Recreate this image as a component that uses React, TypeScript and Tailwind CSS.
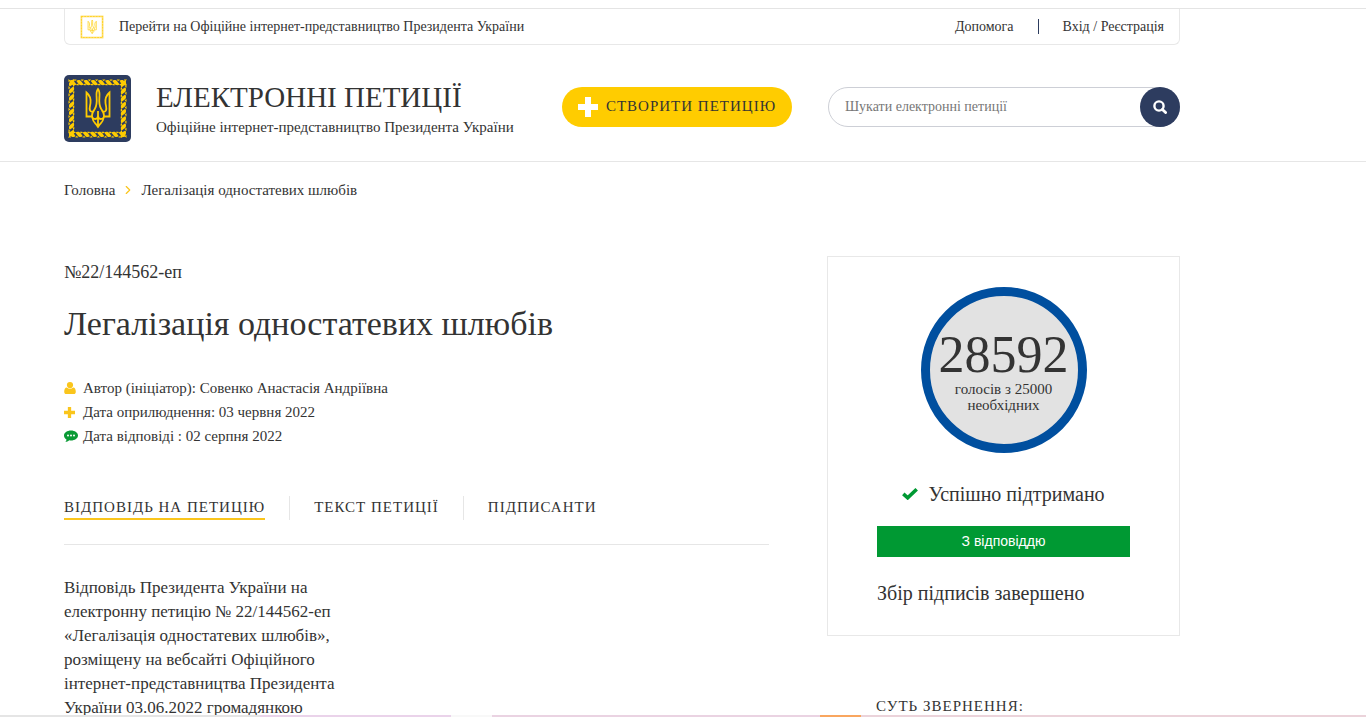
import React from 'react';
import { ChevronRight } from 'lucide-react';

type IconProps = { className?: string };

const PlusIcon: React.FC<IconProps> = ({ className }) => (
  <svg viewBox="0 0 20 20" fill="currentColor" className={className} aria-hidden="true">
    <path d="M7 0h6v7h7v6h-7v7H7v-7H0V7h7z" />
  </svg>
);

const UserIcon: React.FC<IconProps> = ({ className }) => (
  <svg viewBox="0 0 12 12" fill="currentColor" className={className} aria-hidden="true">
    <circle cx="6" cy="3.1" r="3.1" />
    <path d="M2.900 5.500C1 5.500.200 7.600.200 9.700.200 11.200 1 12 2.200 12h7.600c1.200 0 2-.8 2-2.300 0-2.100-.8-4.200-2.700-4.200-.8.800-1.900 1.200-3.100 1.200s-2.300-.4-3.100-1.200z" />
  </svg>
);

const CommentIcon: React.FC<IconProps> = ({ className }) => (
  <svg viewBox="0 0 14 12" className={className} aria-hidden="true">
    <path d="M7 .500c3.900 0 7 2.200 7 5s-3.100 5-7 5c-.6 0-1.200-.1-1.800-.2C4.100 11.300 2.800 11.900 1.300 12c.7-.8 1.100-1.500 1.200-2.600C.900 8.500 0 7.100 0 5.500c0-2.800 3.100-5 7-5z" fill="currentColor" />
    <g fill="#ffffff">
      <circle cx="4" cy="5.500" r="1" />
      <circle cx="7" cy="5.500" r="1" />
      <circle cx="10" cy="5.500" r="1" />
    </g>
  </svg>
);

const CheckIcon: React.FC<IconProps> = ({ className }) => (
  <svg viewBox="0 0 16 12" fill="none" stroke="currentColor" strokeWidth="3.6" className={className} aria-hidden="true">
    <path d="M1.300 5.800l4.400 4L14.700 1.300" />
  </svg>
);

const SearchIcon: React.FC<IconProps> = ({ className }) => (
  <svg viewBox="0 0 14 14" fill="none" stroke="currentColor" className={className} aria-hidden="true">
    <circle cx="6" cy="6" r="4.600" strokeWidth="2.400" />
    <path d="M9.400 9.400l3.200 3.200" strokeWidth="2.800" strokeLinecap="round" />
  </svg>
);

const meta = [
  { icon: UserIcon, color: 'text-[#fac51c]', size: 'size-3', text: 'Автор (ініціатор): Совенко Анастасія Андріївна' },
  { icon: PlusIcon, color: 'text-[#fac51c]', size: 'size-[11px]', text: 'Дата оприлюднення: 03 червня 2022' },
  { icon: CommentIcon, color: 'text-[#0a9a35]', size: 'h-3 w-[14px]', text: 'Дата відповіді : 02 серпня 2022' },
];

const tabs = [
  { label: 'Відповідь на петицію', active: true },
  { label: 'Текст петиції', active: false },
  { label: 'Підписанти', active: false },
];

const sides = [0, 90, 180, 270];
const leaves = [0, 1, 2, 3, 4, 5, 6, 7];

const Trident: React.FC = () => (
  <g fill="none" stroke="#ffcc00" strokeLinejoin="miter" strokeWidth="1.8">
    <path d="M34 14c-1.500 2-1.700 5-1.400 8 .4 5 .1 9-1.800 12-1.300 2-2.800 4-2.800 6.500 0 2 1.500 3.500 3.300 3.500 1.700 0 2.700-1.400 2.700-3.500 0 2.100 1 3.500 2.700 3.500 1.800 0 3.300-1.500 3.300-3.500 0-2.500-1.500-4.500-2.800-6.500-1.900-3-2.200-7-1.800-12 .3-3 .1-6-1.400-8z" />
    <path d="M28 41.500h-5.500V17.500c3.500 3 4.500 6 4 10.500-.3 3-1.500 5-.5 7.500.5 1.200 2 1.500 4 .5M40 41.500h5.500V17.500c-3.500 3-4.500 6-4 10.500.3 3 1.500 5 .5 7.500-.5 1.200-2 1.500-4 .5" />
    <path d="M34 36v15M28.500 43c.5 4 2.500 5 3.800 6.500L34 52l1.700-2.500C37 48 39 47 39.500 43" />
  </g>
);

const Crest: React.FC = () => (
  <svg viewBox="0 0 67 67" className="size-[67px] shrink-0" aria-hidden="true">
    <rect width="67" height="67" rx="5" fill="#2d3c5f" />
    {sides.map((angle) => (
      <g key={angle} transform={`rotate(${angle} 33.5 33.5)`} fill="#ffcc00">
        {leaves.map((n) => (
          <path
            key={n}
            transform={`translate(${5 + n * 7.2} 4.5)`}
            d="M0 1.200c2-1.400 4.500-.8 5.300 1l2.200 2.900c-2.200 1.100-4.500.6-5.500-1zM4.500 0h3.200l-1.800 1.800zM0 4.600l2-.4.8 1.600H.5z"
          />
        ))}
      </g>
    ))}
    <Trident />
  </svg>
);

const SmallCrest: React.FC = () => (
  <svg viewBox="0 0 67 67" className="size-6 shrink-0" aria-hidden="true">
    <rect x="4" y="4" width="59" height="59" fill="none" stroke="#ffe07a" strokeWidth="5" />
    <rect x="4" y="4" width="59" height="59" fill="none" stroke="#ffd42a" strokeWidth="3" strokeDasharray="5 3" />
    <g strokeWidth="3">
      <Trident />
    </g>
  </svg>
);

const TopBar: React.FC = () => (
  <div className="flex h-9 items-center rounded-b-md border border-t-0 border-[#e8e8e8] px-[15px] text-[14px]">
    <a href="#" className="flex items-center gap-[15px]">
      <SmallCrest />
      Перейти на Офіційне інтернет-представництво Президента України
    </a>
    <nav className="ml-auto flex items-center">
      <a href="#">Допомога</a>
      <span className="mx-6 h-[15px] w-px bg-[#2d3c5f]" />
      <a href="#">Вхід / Реєстрація</a>
    </nav>
  </div>
);

const Header: React.FC = () => (
  <header className="border-b border-[#e6e6e6]">
    <div className="ml-16 max-w-[1116px]">
      <TopBar />
      <div className="flex h-[116px] items-center pb-px pt-2">
        <div className="mt-1 flex grow items-center gap-[25px]">
          <Crest />
          <div>
            <p className="text-[29px] leading-9 uppercase">Електронні петиції</p>
            <p className="text-[15px] leading-6">Офіційне інтернет-представництво Президента України</p>
          </div>
        </div>
        <button className="flex h-10 w-[230px] shrink-0 items-center justify-center gap-2 rounded-full bg-[#ffcc00] text-[15px] uppercase tracking-[1px] whitespace-nowrap">
          <PlusIcon className="size-5 text-white" />
          Створити петицію
        </button>
        <form className="ml-9 flex h-10 w-[352px] rounded-full border border-[#cdcfd6]">
          <input
            type="text"
            aria-label="Шукати електронні петиції"
            placeholder="Шукати електронні петиції"
            className="min-w-0 grow bg-transparent pl-4 text-[14px] outline-none placeholder:text-[#777777]"
          />
          <button aria-label="Пошук" className="-m-px flex size-10 shrink-0 items-center justify-center rounded-full bg-[#2d3c5f] text-white">
            <SearchIcon className="size-[14px]" />
          </button>
        </form>
      </div>
    </div>
  </header>
);

const Petition: React.FC = () => (
  <article className="w-[705px]">
    <p className="text-[18px] leading-8">№22/144562-еп</p>
    <h1 className="mt-4 text-[34px] leading-10">Легалізація одностатевих шлюбів</h1>
    <ul className="mt-8 text-[15px] leading-6">
      {meta.map((item) => (
        <li key={item.text} className="flex items-center">
          <span className="w-[19px]">
            <item.icon className={`${item.size} ${item.color}`} />
          </span>
          {item.text}
        </li>
      ))}
    </ul>
    <nav className="mt-12 flex border-b border-[#e6e6e6] pb-6 text-[15px] uppercase tracking-[1px]">
      {tabs.map((tab) => (
        <div key={tab.label} className="flex not-first:ml-6 not-first:border-l not-first:border-[#e6e6e6] not-first:pl-6">
          <a href="#" className={tab.active ? 'border-b-2 border-[#fac51c] leading-[22px]' : 'leading-[22px]'}>
            {tab.label}
          </a>
        </div>
      ))}
    </nav>
    <p className="mt-[31px] max-w-[290px] text-[17px] leading-6">
      Відповідь Президента України на електронну петицію № 22/144562-еп «Легалізація одностатевих шлюбів», розміщену на
      вебсайті Офіційного інтернет-представництва Президента України 03.06.2022 громадянкою
    </p>
  </article>
);

const Sidebar: React.FC = () => (
  <aside className="w-[353px]">
    <section className="border border-[#e8e8e8] px-[49px] pt-[30px] pb-7">
      <div className="mx-auto flex size-[166px] flex-col items-center rounded-full border-[9px] border-[#004f9f] bg-[#e2e2e2] pt-[33px] text-center">
        <span className="text-[52px] leading-[52px]">28592</span>
        <span className="text-[15px] leading-4">
          голосів з 25000
          <br />
          необхідних
        </span>
      </div>
      <p className="mt-[27px] flex items-center justify-center gap-[10px] text-[20px] leading-7">
        <CheckIcon className="h-3 w-4 text-[#009933]" />
        Успішно підтримано
      </p>
      <p className="mt-[18px] bg-[#009933] text-center font-['Liberation_Sans',sans-serif] text-[14px] leading-[31px] text-white">
        З відповіддю
      </p>
      <p className="mt-[22px] text-[20px] leading-7">Збір підписів завершено</p>
    </section>
    <h2 className="mt-[60px] ml-[49px] text-[15px] leading-5 uppercase tracking-[1px]">Суть звернення:</h2>
  </aside>
);

const App: React.FC = () => {
  return (
    <div className="min-h-screen bg-white pt-2 font-['Liberation_Serif',serif] text-[#333333]">
      <div className="h-px bg-[#e4e4e4]" />
      <Header />
      <main className="ml-16 max-w-[1116px]">
        <nav className="flex h-14 items-center gap-[6px] text-[15px]">
          <a href="#">Головна</a>
          <ChevronRight className="size-[14px] text-[#fac51c]" />
          <span>Легалізація одностатевих шлюбів</span>
        </nav>
        <div className="mt-[38px] flex items-start justify-between">
          <Petition />
          <Sidebar />
        </div>
      </main>
      <div className="fixed inset-x-0 bottom-0 flex h-[2px]">
        <div className="w-[19%] bg-[#e5e5e5]" />
        <div className="w-[14%] bg-[#ead3ea]" />
        <div className="w-[3%] bg-[#f8f8f8]" />
        <div className="w-[24%] bg-[#ead3e2]" />
        <div className="w-[3%] bg-[#f9a65f]" />
        <div className="grow bg-[#ebd3da]" />
      </div>
    </div>
  );
};

export default App;
